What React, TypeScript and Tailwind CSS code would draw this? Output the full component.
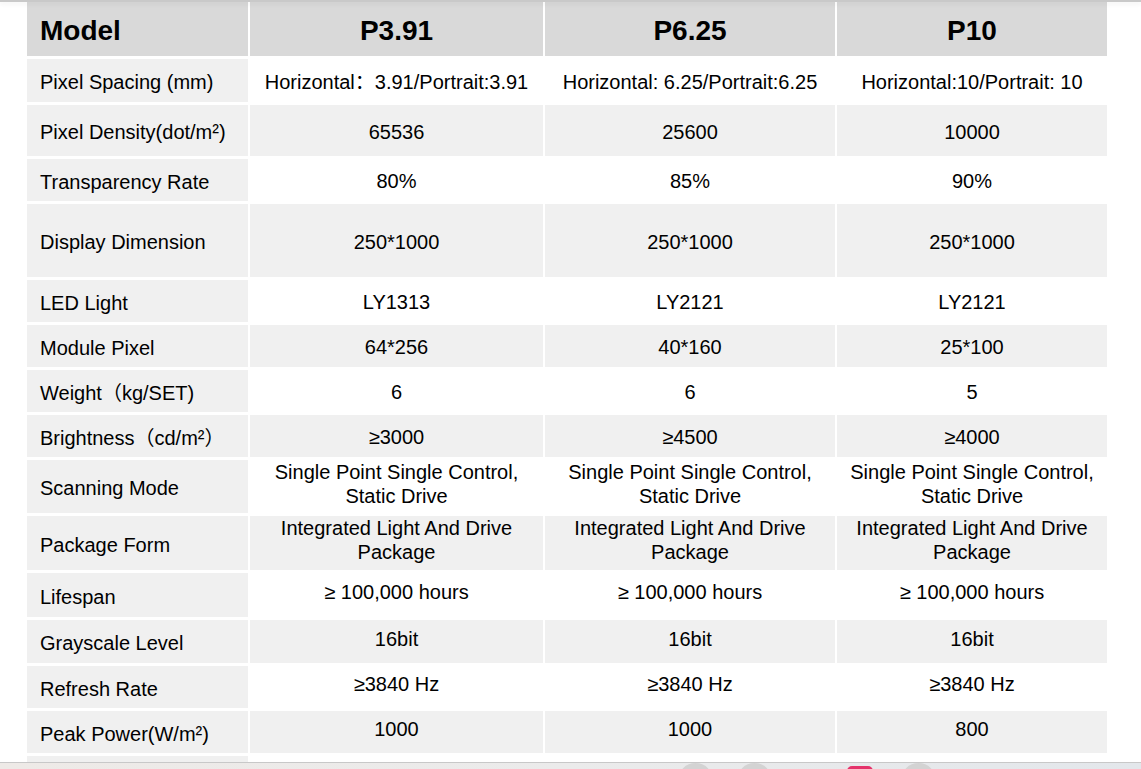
const font = { fontFamily: '"Liberation Sans", Arial, "Noto Sans CJK SC", sans-serif' };

type Row = {
  label: string;
  values: string[][];
  h: string;
  shaded: boolean;
  lift?: boolean;
};

const rows: Row[] = [
  { label: 'Pixel Spacing (mm)', values: [['Horizontal：3.91/Portrait:3.91'], ['Horizontal: 6.25/Portrait:6.25'], ['Horizontal:10/Portrait: 10']], h: 'h-[43px]', shaded: false },
  { label: 'Pixel Density(dot/m²)', values: [['65536'], ['25600'], ['10000']], h: 'h-[51px]', shaded: true },
  { label: 'Transparency Rate', values: [['80%'], ['85%'], ['90%']], h: 'h-[42px]', shaded: false },
  { label: 'Display Dimension', values: [['250*1000'], ['250*1000'], ['250*1000']], h: 'h-[73px]', shaded: true },
  { label: 'LED Light', values: [['LY1313'], ['LY2121'], ['LY2121']], h: 'h-[42px]', shaded: false },
  { label: 'Module Pixel', values: [['64*256'], ['40*160'], ['25*100']], h: 'h-[42px]', shaded: true },
  { label: 'Weight（kg/SET)', values: [['6'], ['6'], ['5']], h: 'h-[42px]', shaded: false },
  { label: 'Brightness（cd/m²）', values: [['≥3000'], ['≥4500'], ['≥4000']], h: 'h-[42px]', shaded: true },
  {
    label: 'Scanning Mode',
    values: [
      ['Single Point Single Control,', 'Static Drive'],
      ['Single Point Single Control,', 'Static Drive'],
      ['Single Point Single Control,', 'Static Drive'],
    ],
    h: 'h-[53px]',
    shaded: false,
    lift: true,
  },
  {
    label: 'Package Form',
    values: [
      ['Integrated Light And Drive', 'Package'],
      ['Integrated Light And Drive', 'Package'],
      ['Integrated Light And Drive', 'Package'],
    ],
    h: 'h-[54px]',
    shaded: true,
    lift: true,
  },
  { label: 'Lifespan', values: [['≥ 100,000 hours'], ['≥ 100,000 hours'], ['≥ 100,000 hours']], h: 'h-[44px]', shaded: false, lift: true },
  { label: 'Grayscale Level', values: [['16bit'], ['16bit'], ['16bit']], h: 'h-[43px]', shaded: true, lift: true },
  { label: 'Refresh Rate', values: [['≥3840 Hz'], ['≥3840 Hz'], ['≥3840 Hz']], h: 'h-[42px]', shaded: false, lift: true },
  { label: 'Peak Power(W/m²)', values: [['1000'], ['1000'], ['800']], h: 'h-[42px]', shaded: true, lift: true },
  { label: '', values: [[''], [''], ['']], h: 'h-[42px]', shaded: false },
];

const App = () => {
  return (
    <div className="min-h-screen bg-white text-black" style={font}>
      {/* top shadow from the page header */}
      <div className="fixed top-0 left-0 right-0 h-[2px] bg-[#c9c9c9] shadow-[0_2px_4px_rgba(0,0,0,0.08)] z-10"></div>

      <div className="pt-[2px] pl-[27px]">
        <div className="grid grid-cols-[221px_293px_290px_270px] gap-x-[2px] gap-y-[3px]">
          {/* Header */}
          <div className="h-[54px] bg-[#d9d9d9] flex items-center pl-[13px] pt-[3px] text-[28px] font-bold">Model</div>
          <div className="h-[54px] bg-[#d9d9d9] flex items-center justify-center pt-[3px] text-[28px] font-bold">P3.91</div>
          <div className="h-[54px] bg-[#d9d9d9] flex items-center justify-center pt-[3px] text-[28px] font-bold">P6.25</div>
          <div className="h-[54px] bg-[#d9d9d9] flex items-center justify-center pt-[3px] text-[28px] font-bold">P10</div>

          {rows.map((row, i) => (
            <div key={i} className="contents">
              <div className={`${row.h} bg-[#f0f0f0] flex items-center pl-[13px] pt-[3px] text-[20px]`}>{row.label}</div>
              {row.values.map((v, j) => (
                <div
                  key={j}
                  className={`${row.h} ${row.shaded ? 'bg-[#f0f0f0]' : 'bg-white'} ${row.lift ? 'pb-[6px]' : 'pt-[2px]'} flex flex-col items-center justify-center text-center text-[20px] leading-6`}
                >
                  {v.map((line, k) => (
                    <span key={k}>{line}</span>
                  ))}
                </div>
              ))}
            </div>
          ))}
        </div>
      </div>

      {/* bottom toolbar overlay */}
      <div className="fixed bottom-0 left-0 right-0 h-[7px] border-t border-[#c8c8c8] bg-gradient-to-r from-[#eeeae7] via-[#ebebeb] to-[#e3e7eb] overflow-hidden flex items-start pl-[678px] z-10">
        <div className="w-[35px] h-[35px] rounded-full bg-[#d3d3d3] shrink-0"></div>
        <div className="w-[35px] h-[35px] rounded-full bg-[#d3d3d3] shrink-0 ml-[24px]"></div>
        <div className="w-[26px] h-[20px] rounded-t-[5px] bg-[#e4336b] shrink-0 ml-[75px] mt-[3px]"></div>
        <div className="w-[35px] h-[35px] rounded-full bg-[#d3d3d3] shrink-0 ml-[28px]"></div>
      </div>
    </div>
  );
};

export default App;
